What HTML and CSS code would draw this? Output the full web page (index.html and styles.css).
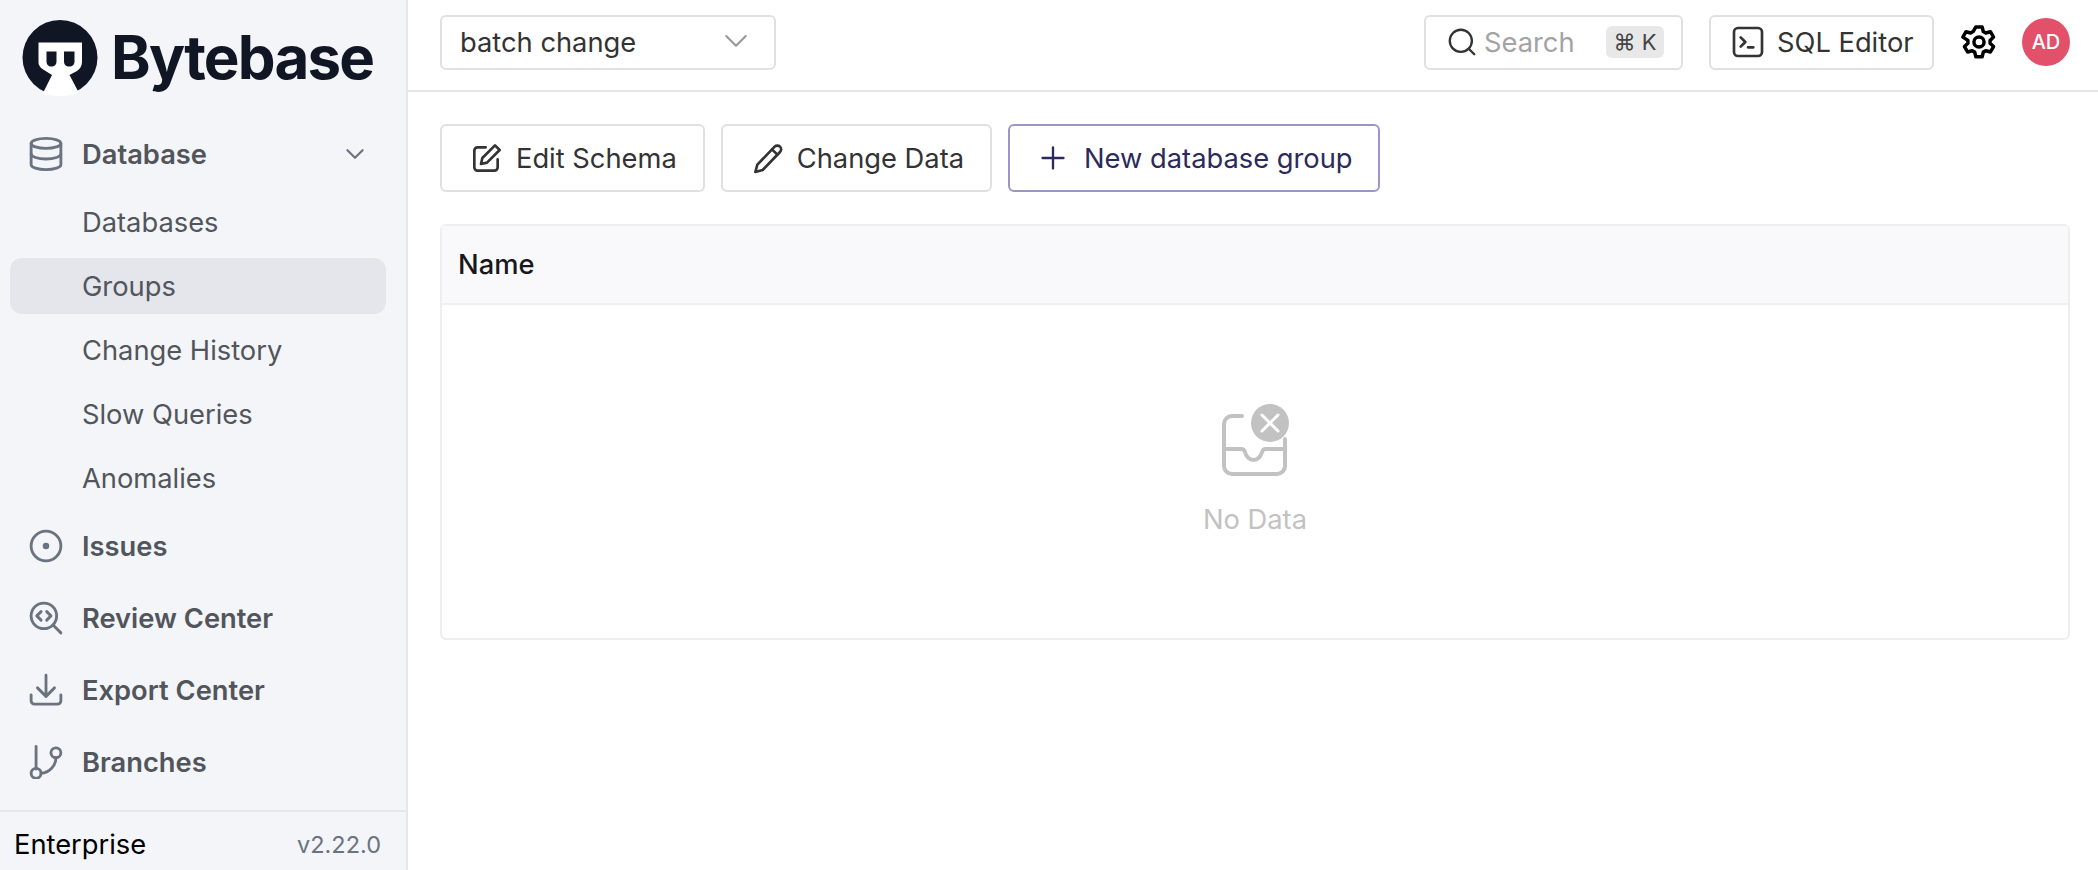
FILE: index.html
```html
<!DOCTYPE html>
<html lang="en">
<head>
  <meta charset="UTF-8" />
  <title>Bytebase</title>
  <link rel="stylesheet" href="styles.css">
</head>
<body>

<div class="app">
  <aside class="sidebar">
    <div class="logo">
      <svg class="logo-mark" viewBox="0 0 76 76">
        <circle cx="38" cy="37.500" r="37.500" fill="#101623"/>
        <path d="M16.500 22.500H60V42c0 4-2 7-5 9l-7.500 4 9.500 18c-5 2-12 3-19 3s-13-1-17-3l9-18-8-5c-3-2-5.500-4-5.500-8z" fill="#fff"/>
        <path d="M24.500 31.500h10v10c0 3-2 5-5 5s-5-2-5-5zM42 31.500h10.500v10c0 3-2 5-5.250 5s-5.250-2-5.250-5z" fill="#101623"/>
      </svg>
      <span class="logo-text">Bytebase</span>
    </div>

    <nav class="nav">
      <div class="nav-item">
        <svg class="nav-icon" viewBox="0 0 24 24"><ellipse cx="12" cy="4.500" rx="10.500" ry="3.500"/><path d="M1.500 4.500v15c0 1.900 4.700 3.500 10.500 3.500s10.500-1.600 10.500-3.500v-15"/><path d="M1.500 12c0 1.900 4.700 3.500 10.500 3.500s10.500-1.600 10.500-3.500"/></svg>
        <span>Database</span>
        <svg class="nav-chevron" viewBox="0 0 24 24"><path d="M5 8.500l7 7 7-7"/></svg>
      </div>
      <div class="sub-item">Databases</div>
      <div class="sub-item active"><span>Groups</span></div>
      <div class="sub-item">Change History</div>
      <div class="sub-item">Slow Queries</div>
      <div class="sub-item">Anomalies</div>
      <div class="nav-item">
        <svg class="nav-icon" viewBox="0 0 24 24"><circle cx="12" cy="12" r="10.500"/><circle class="solid" cx="12" cy="12" r="1.300"/></svg>
        <span>Issues</span>
      </div>
      <div class="nav-item">
        <svg class="nav-icon" viewBox="0 0 24 24"><circle cx="10.500" cy="10.500" r="9"/><path d="M17 17l5.500 5.500"/><path d="M8.500 7.500l-3 3 3 3M12.500 7.500l3 3-3 3"/></svg>
        <span>Review Center</span>
      </div>
      <div class="nav-item">
        <svg class="nav-icon" viewBox="0 0 24 24"><path d="M1.500 15.500v4c0 1.400 1.100 2.500 2.500 2.500h16c1.400 0 2.500-1.100 2.500-2.500v-4"/><path d="M12 1.500v14.500M6 10.500l6 6 6-6"/></svg>
        <span>Export Center</span>
      </div>
      <div class="nav-item">
        <svg class="nav-icon" viewBox="0 0 24 24"><path d="M5 1v16"/><circle cx="5" cy="20" r="3.500"/><circle cx="19" cy="5.500" r="3.500"/><path d="M19 9c0 6-5 10.500-10.500 11"/></svg>
        <span>Branches</span>
      </div>
    </nav>

    <div class="sidebar-footer">
      <span class="plan">Enterprise</span>
      <span class="version">v2.22.0</span>
    </div>
  </aside>

  <div class="main">
    <header class="topbar">
      <div class="project-select">
        <span>batch change</span>
        <svg class="select-chevron" viewBox="0 0 24 24"><path d="M3 6.500l9 9 9-9"/></svg>
      </div>
      <div class="topbar-right">
        <div class="search">
          <svg class="search-icon" viewBox="0 0 24 24"><circle cx="11" cy="11" r="9.500"/><path d="M18 18l4.500 4.500"/></svg>
          <span class="search-text">Search</span>
          <span class="kbd">⌘ K</span>
        </div>
        <div class="btn sql-btn">
          <svg class="btn-icon" viewBox="0 0 24 24"><rect x="1.500" y="1.500" width="21" height="21" rx="3"/><path d="M6.500 8.500l3.500 3.500-3.500 3.500M12 16h4"/></svg>
          <span>SQL Editor</span>
        </div>
        <svg class="gear" viewBox="0 0 24 24"><path d="M10 2.500h4l.7 2.900 1.600.9 2.900-.8 2 3.400-2.200 2.100v1.800l2.200 2.100-2 3.400-2.900-.8-1.600.9-.7 2.900h-4l-.7-2.900-1.600-.9-2.900.8-2-3.400 2.200-2.100v-1.800L1.800 8.900l2-3.400 2.900.8 1.600-.9z"/><circle cx="12" cy="12" r="3.200"/></svg>
        <div class="avatar">AD</div>
      </div>
    </header>

    <main class="content">
      <div class="actions">
        <div class="btn">
          <svg class="btn-icon" viewBox="0 0 24 24"><path d="M11 4H5a2.500 2.500 0 0 0-2.500 2.500V19A2.500 2.500 0 0 0 5 21.500h12.500A2.500 2.500 0 0 0 20 19v-6"/><path d="M18 2.500l3.500 3.500L12 15.500l-4.500 1 1-4.500z"/></svg>
          <span>Edit Schema</span>
        </div>
        <div class="btn">
          <svg class="btn-icon" viewBox="0 0 24 24"><path d="M17 3.500a2.800 2.800 0 0 1 4 4L8 21l-5.500 1.500L4 17z"/><path d="M15 5.500l4 4"/></svg>
          <span>Change Data</span>
        </div>
        <div class="btn btn-primary">
          <svg class="btn-icon plus" viewBox="0 0 24 24"><path d="M12 3v18M3 12h18"/></svg>
          <span>New database group</span>
        </div>
      </div>

      <div class="table">
        <div class="table-head">Name</div>
        <div class="table-empty">
          <svg class="empty-icon" viewBox="0 0 68 74">
            <path class="empty-line" d="M21 13H11a8 8 0 0 0-8 8v42a8 8 0 0 0 8 8h45a8 8 0 0 0 8-8V36"/>
            <path class="empty-line" d="M3 46h18c1.500 0 2 1 2.500 2 1.500 5 4.500 9 9 9s7.500-4 9-9c.5-1 1-2 2.500-2h20"/>
            <circle cx="49" cy="20" r="19" fill="#c2c2c2"/>
            <path d="M41 12l16 16M57 12L41 28" stroke="#fff" stroke-width="3" stroke-linecap="round"/>
          </svg>
          <div class="empty-text">No Data</div>
        </div>
      </div>
    </main>
  </div>
</div>

</body>
</html>
```

FILE: styles.css
```css
* {
  box-sizing: border-box;
}

body {
  margin: 0;
  height: 100vh;
  overflow: hidden;
  background: #fff;
  font-family: Inter, "Liberation Sans", sans-serif;
  font-size: 27.300px;
  color: #3f3f46;
}

svg {
  fill: none;
  stroke: currentColor;
  stroke-width: 2;
  stroke-linecap: round;
  stroke-linejoin: round;
  flex-shrink: 0;
}

.app {
  display: flex;
  height: 100%;
}

/* sidebar */
.sidebar {
  width: 408px;
  flex-shrink: 0;
  display: flex;
  flex-direction: column;
  background: #f3f5f8;
  border-right: 2px solid #e5e7eb;
}

.logo {
  height: 118px;
  display: flex;
  align-items: flex-start;
  gap: 13px;
  padding: 20px 0 0 22px;
}

.logo-mark {
  width: 76px;
  height: 76px;
  stroke: none;
}

.logo-text {
  font-size: 60px;
  line-height: 74px;
  font-weight: 700;
  letter-spacing: -1.800px;
  color: #101623;
}

.nav {
  flex: 1;
  display: flex;
  flex-direction: column;
  color: #52555c;
}

.nav-item {
  height: 72px;
  display: flex;
  align-items: center;
  gap: 19px;
  padding-left: 29px;
  font-weight: 600;
}

.nav-icon {
  width: 34px;
  height: 34px;
  color: #6b7280;
}

.nav-icon .solid {
  fill: currentColor;
}

.nav-chevron {
  width: 26px;
  height: 26px;
  margin-left: auto;
  margin-right: 38px;
  color: #6b7280;
}

.sub-item {
  height: 56px;
  margin: 4px 20px 4px 10px;
  padding-left: 72px;
  display: flex;
  align-items: center;
  border-radius: 12px;
}

.sub-item.active {
  background: #e4e6eb;
}

.sidebar-footer {
  height: 60px;
  display: flex;
  align-items: center;
  justify-content: space-between;
  padding: 6px 25px 0 14px;
  border-top: 2px solid #e5e7eb;
}

.plan {
  color: #000;
}

.version {
  font-size: 23.500px;
  color: #6b7280;
}

/* top bar */
.main {
  flex: 1;
  min-width: 0;
  display: flex;
  flex-direction: column;
}

.topbar {
  height: 92px;
  flex-shrink: 0;
  display: flex;
  align-items: center;
  justify-content: space-between;
  padding: 0 28px 6px 32px;
  border-bottom: 2px solid #e5e5e5;
}

.project-select {
  width: 336px;
  height: 55px;
  display: flex;
  align-items: center;
  justify-content: space-between;
  padding: 0 25px 0 18px;
  border: 2px solid #e0e0e0;
  border-radius: 6px;
  color: #333;
}

.select-chevron {
  width: 26px;
  height: 26px;
  color: #999;
}

.topbar-right {
  display: flex;
  align-items: center;
}

.search {
  width: 259px;
  height: 55px;
  display: flex;
  align-items: center;
  padding: 0 17px 0 22px;
  border: 2px solid #e0e0e0;
  border-radius: 6px;
}

.search-icon {
  width: 28px;
  height: 28px;
  color: #333;
}

.search-text {
  margin-left: 8px;
  color: #a3a3a3;
}

.kbd {
  width: 58px;
  height: 32px;
  margin-left: auto;
  display: flex;
  align-items: center;
  justify-content: center;
  background: #e8e8e8;
  border-radius: 6px;
  font-size: 22px;
  color: #444;
}

.btn {
  height: 68px;
  display: flex;
  align-items: center;
  gap: 13px;
  padding: 0 26px 0 29px;
  border: 2px solid #e0e0e0;
  border-radius: 6px;
  color: #333;
}

.btn-icon {
  width: 32px;
  height: 32px;
}

.sql-btn {
  height: 55px;
  width: 225px;
  margin-left: 26px;
  padding: 0 18px 0 21px;
}

.gear {
  width: 38px;
  height: 38px;
  margin-left: 26px;
  color: #000;
  stroke-width: 2.200;
}

.avatar {
  width: 48px;
  height: 48px;
  margin-left: 24px;
  display: flex;
  align-items: center;
  justify-content: center;
  border-radius: 50%;
  background: #e2506a;
  color: #fff;
  font-size: 20px;
  font-weight: 500;
}

/* content */
.content {
  flex: 1;
  padding: 32px 28px 0 32px;
}

.actions {
  display: flex;
  gap: 16px;
}

.btn-primary {
  border-color: #9a96c8;
  color: #2c2a5c;
  padding-right: 25px;
}

.plus {
  width: 28px;
  height: 28px;
  margin-right: 4px;
}

.table {
  height: 416px;
  margin-top: 32px;
  display: flex;
  flex-direction: column;
  border: 2px solid #eeeeee;
  border-radius: 6px;
}

.table-head {
  height: 79px;
  flex-shrink: 0;
  display: flex;
  align-items: center;
  padding-left: 16px;
  background: #f9f9fb;
  border-bottom: 2px solid #f0f0f0;
  color: #18181b;
  font-weight: 500;
}

.table-empty {
  flex: 1;
  display: flex;
  flex-direction: column;
  align-items: center;
  justify-content: center;
  padding-bottom: 4px;
}

.empty-icon {
  width: 68px;
  height: 74px;
  stroke: none;
}

.empty-line {
  fill: none;
  stroke: #c2c2c2;
  stroke-width: 4;
}

.empty-text {
  margin-top: 26px;
  color: #c2c2c2;
}
```
